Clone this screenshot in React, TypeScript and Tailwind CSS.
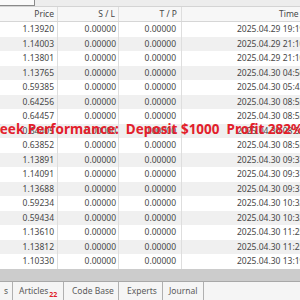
const rows = [
  ["1.13920", "2025.04.29 19:19:33"],
  ["1.14003", "2025.04.29 21:10:05"],
  ["1.13801", "2025.04.29 21:10:41"],
  ["1.13765", "2025.04.30 04:56:12"],
  ["0.59385", "2025.04.30 05:43:27"],
  ["0.64256", "2025.04.30 08:55:02"],
  ["0.64457", "2025.04.30 08:55:18"],
  ["0.64405", "2025.04.30 08:55:40"],
  ["0.63852", "2025.04.30 08:55:51"],
  ["1.13891", "2025.04.30 09:37:10"],
  ["1.14091", "2025.04.30 09:37:24"],
  ["1.13688", "2025.04.30 09:37:45"],
  ["0.59234", "2025.04.30 10:32:08"],
  ["0.59434", "2025.04.30 10:32:30"],
  ["1.13610", "2025.04.30 11:25:14"],
  ["1.13812", "2025.04.30 11:25:39"],
  ["1.10330", "2025.04.30 13:19:56"],
];

// tab label + fixed width (px) taken from the separators in the screenshot
const tabs: [string, string][] = [
  ["Articles", "w-[51px] pl-[6px]"],
  ["Code Base", "w-[55px] pl-[8px]"],
  ["Experts", "w-[44px] pl-[8px]"],
  ["Journal", "w-[41px] pl-[6px]"],
];

export default function App() {
  return (
    <div
      className="relative w-[300px] h-[300px] overflow-hidden bg-white text-[#474747]"
      style={{ fontFamily: '"Noto Sans", "Open Sans", sans-serif' }}
    >
      {/* top strip */}
      <div className="h-[7px] bg-[#ededed] border-b border-[#d4d4d4]">
        <div className="w-[35px] h-[6px] bg-[#fafafa] border-r border-b border-[#8a8a8a]" />
      </div>

      {/* header */}
      <div className="flex h-[15px] bg-[#f7f7f7] border-b border-[#d6d6d6] text-[8.5px] leading-[14px]">
        <div className="w-[58px] shrink-0 text-right pr-[3px] border-r border-[#dedede]">Price</div>
        <div className="w-[61px] shrink-0 text-right pr-[3px] border-r border-[#dedede]">S / L</div>
        <div className="w-[63px] shrink-0 text-right pr-[4px] border-r border-[#dedede]">T / P</div>
        <div className="w-[140px] shrink-0 pl-[97px]">Time</div>
      </div>

      {/* rows */}
      {rows.map(([price, time], i) => (
        <div
          key={i}
          className={
            "flex h-[14.5px] text-[8.5px] leading-[14.5px] " +
            (i % 2 === 0 ? "bg-white" : "bg-[#f0f0f0]")
          }
        >
          <div className="w-[58px] shrink-0 text-right pr-[3px] border-r border-[#dedede]">{price}</div>
          <div className="w-[61px] shrink-0 text-right pr-[2px] border-r border-[#dedede]">0.00000</div>
          <div className="w-[63px] shrink-0 text-right pr-[5px] border-r border-[#dedede]">0.00000</div>
          <div className="w-[160px] shrink-0 pl-[55px] whitespace-nowrap">{time}</div>
        </div>
      ))}

      {/* gray band */}
      <div className="h-[13px] bg-[#cccccc] border-b border-[#a8a8a8]" />

      {/* tabs */}
      <div className="flex h-[18px] bg-[#f5f5f5] text-[8.5px] text-[#5a5a5a] leading-[18px]">
        <div className="w-[13px] shrink-0 text-right pr-[4px] border-r border-[#b0b0b0]">s</div>
        {tabs.map(([t, w]) => (
          <div key={t} className={w + " shrink-0 border-r border-[#b0b0b0] whitespace-nowrap"}>
            {t}
            {t === "Articles" && (
              <span className="relative top-[3px] ml-[1px] text-[7px] text-[#e0202a] font-bold">22</span>
            )}
          </div>
        ))}
      </div>

      {/* overlay caption */}
      <div className="absolute left-[-13px] top-[120px] whitespace-pre text-[13.5px] font-bold text-[#e3202b] leading-[18px]">
        {"Week Performance:  Deposit $1000  Profit 282%"}
      </div>
    </div>
  );
}
